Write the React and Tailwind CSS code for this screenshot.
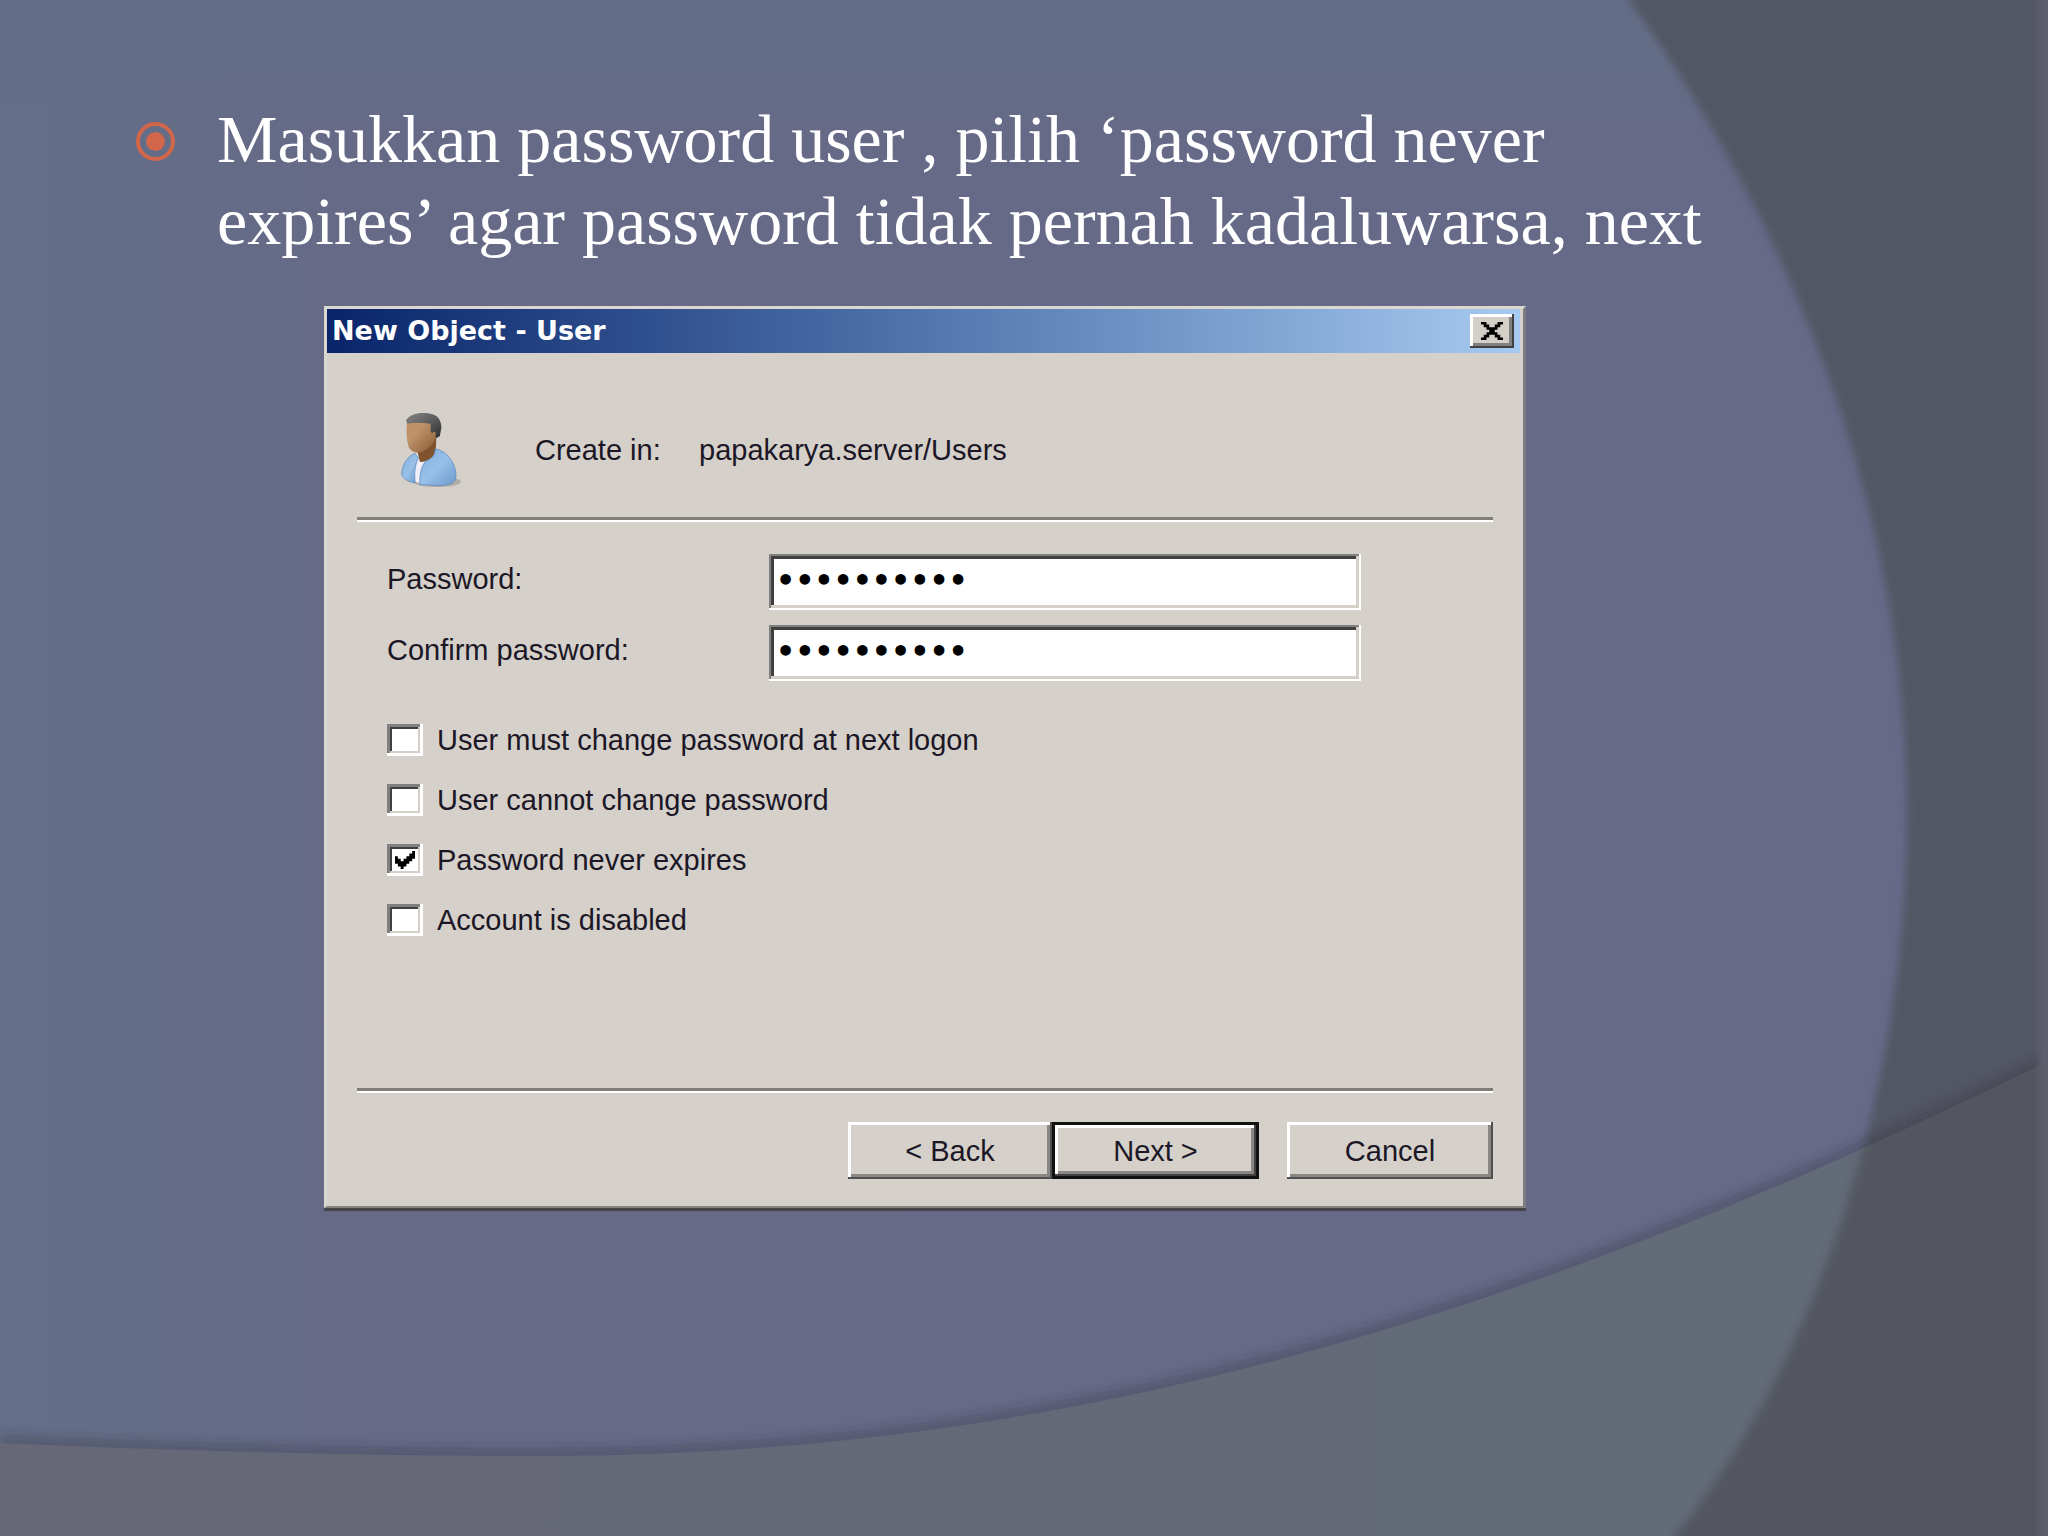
import { useState } from 'react';

const OPTIONS = [
  { id: 'mustChange', label: 'User must change password at next logon' },
  { id: 'cannotChange', label: 'User cannot change password' },
  { id: 'neverExpires', label: 'Password never expires' },
  { id: 'disabled', label: 'Account is disabled' },
];

const ARC = 'M1629 0C1800 240 1907 520 1907 815C1907 1100 1810 1370 1675 1536';
const WAVE = 'M0 1443C180 1451 360 1456 540 1456C1050 1456 1500 1330 2048 1062';

function Backdrop() {
  return (
    <svg
      className="absolute inset-0 h-full w-full"
      viewBox="0 0 2048 1536"
      preserveAspectRatio="none"
      aria-hidden="true"
    >
      <defs>
        <linearGradient id="base" x1="0" y1="0" x2="1" y2="0">
          <stop offset="0" stopColor="#646e88" />
          <stop offset="0.07" stopColor="#646d87" />
          <stop offset="0.16" stopColor="#666a87" />
          <stop offset="1" stopColor="#666a88" />
        </linearGradient>
        <linearGradient id="topGlow" x1="0" y1="0" x2="0" y2="1">
          <stop offset="0" stopColor="#646d87" />
          <stop offset="0.5" stopColor="#646d87" />
          <stop offset="1" stopColor="#646d87" stopOpacity="0" />
        </linearGradient>
        <linearGradient id="floor" x1="0" y1="0" x2="1" y2="0">
          <stop offset="0" stopColor="#676877" />
          <stop offset="0.45" stopColor="#656977" />
          <stop offset="0.7" stopColor="#636a78" />
          <stop offset="1" stopColor="#636a78" />
        </linearGradient>
        <filter id="soft" x="-10%" y="-10%" width="120%" height="120%">
          <feGaussianBlur stdDeviation="4" />
        </filter>
        <clipPath id="belowWave">
          <path d={`${WAVE}V1536H0Z`} />
        </clipPath>
      </defs>
      <rect width="2048" height="1536" fill="url(#base)" />
      <rect width="2048" height="130" fill="url(#topGlow)" />
      <path d={`${ARC}V1600H2100V-60H1590Z`} fill="#535664" filter="url(#soft)" />
      <path d={WAVE} fill="none" stroke="#2a2d3a" strokeOpacity="0.28" strokeWidth="18" filter="url(#soft)" />
      <g clipPath="url(#belowWave)">
        <rect width="2048" height="1536" fill="url(#floor)" />
        <path d={`${ARC}V1600H2100V-60H1590Z`} fill="#53575f" filter="url(#soft)" />
        <path d="M0 1536H1670" stroke="#70707f" strokeWidth="14" filter="url(#soft)" />
      </g>
      <rect x="2039" y="-20" width="40" height="1600" fill="#5e606d" filter="url(#soft)" />
    </svg>
  );
}

function UserIcon() {
  return (
    <svg className="h-[78px] w-[63px]" viewBox="60 30 190 235" aria-hidden="true">
      <defs>
        <linearGradient id="skin" x1="0" y1="0" x2="1" y2="1">
          <stop offset="0" stopColor="#bd9168" />
          <stop offset="0.35" stopColor="#c0926a" />
          <stop offset="1" stopColor="#865a33" />
        </linearGradient>
        <linearGradient id="hair" x1="0" y1="0" x2="1" y2="1">
          <stop offset="0" stopColor="#868684" />
          <stop offset="0.5" stopColor="#5c5d5d" />
          <stop offset="1" stopColor="#2d2e30" />
        </linearGradient>
        <linearGradient id="shirt" x1="0" y1="0" x2="1" y2="1">
          <stop offset="0" stopColor="#82aedb" />
          <stop offset="0.5" stopColor="#98c0e9" />
          <stop offset="1" stopColor="#6c9bcc" />
        </linearGradient>
      </defs>
      <ellipse cx="172" cy="243" rx="72" ry="16" fill="#8d8b82" opacity="0.5" />
      <path d="M108 158L144 176L136 252L102 242Z" fill="#f0effa" />
      <path d="M110 140L170 96L168 150C162 170 146 184 120 184Z" fill="#80532c" />
      <path d="M106 158C84 164 66 192 65 220C68 235 84 243 106 247C102 218 106 188 116 172Z" fill="url(#shirt)" stroke="#5584b6" strokeWidth="2" />
      <path d="M166 144C200 150 227 184 229 222C230 244 216 254 180 255L120 252C118 222 124 196 138 180C156 176 166 162 166 144Z" fill="url(#shirt)" stroke="#5584b6" strokeWidth="2" />
      <path d="M82 60C78 86 79 114 86 138C92 152 106 158 122 154C144 146 162 130 168 108L164 60Z" fill="url(#skin)" />
      <path d="M78 58C90 40 112 34 138 36C168 38 184 50 185 80L180 106L168 112C170 96 164 86 158 96L153 94L152 68C128 66 104 64 82 68Z" fill="url(#hair)" />
    </svg>
  );
}

function Separator() {
  return <div className="h-[5px] border-t-3 border-b-2 border-t-[#817e79] border-b-white" />;
}

function PasswordField({ id, label, value, onChange }) {
  return (
    <div className="flex">
      <label htmlFor={id} className="w-[382px] pt-[7px]">
        {label}
      </label>
      <input
        id={id}
        type="password"
        value={value}
        onChange={(e) => onChange(e.target.value)}
        className="h-14 w-[592px] bg-white px-[7px] pb-1 font-['DejaVu_Sans',sans-serif] text-[30px] leading-none font-bold text-black shadow-[inset_-2px_-2px_0_#fff,inset_2px_2px_0_#808080,inset_-5px_-5px_0_#d4d0c8,inset_5px_5px_0_#404040] outline-none"
      />
    </div>
  );
}

function CheckOption({ label, checked, onChange }) {
  return (
    <label className="flex h-8 items-center gap-[14px]">
      <span className="grid place-items-center">
        <input
          type="checkbox"
          checked={checked}
          onChange={onChange}
          className="col-start-1 row-start-1 h-8 w-9 appearance-none bg-white shadow-[inset_-3px_-3px_0_#fff,inset_3px_3px_0_#808080,inset_-5px_-5px_0_#d4d0c8,inset_5px_5px_0_#404040]"
        />
        {checked && (
          <svg
            className="pointer-events-none col-start-1 row-start-1 h-[18px] w-5"
            viewBox="0 0 7 7"
            preserveAspectRatio="none"
            aria-hidden="true"
          >
            <path d="M0 2h1v1h1v1h1v-1h1v-1h1v-1h1v-1h1v3h-1v1h-1v1h-1v1h-1v1h-1v-1h-1v-1h-1z" />
          </svg>
        )}
      </span>
      {label}
    </label>
  );
}

function App() {
  const [password, setPassword] = useState('p4p4k4ry4!');
  const [confirm, setConfirm] = useState('p4p4k4ry4!');
  const [checked, setChecked] = useState({ neverExpires: true });

  const toggle = (id) => setChecked((prev) => ({ ...prev, [id]: !prev[id] }));

  return (
    <main className="relative min-h-screen overflow-hidden bg-[#666a87]">
      <Backdrop />
      <div className="relative pt-[98px]">
        <ul className="pl-[136px]">
          <li className="flex gap-[42px]">
            <svg className="mt-6 h-[39px] w-[39px] shrink-0" viewBox="0 0 39 39" aria-hidden="true">
              <circle cx="19.5" cy="19.5" r="17.5" fill="none" stroke="#d1664a" strokeWidth="4" />
              <circle cx="19.5" cy="19.5" r="9.5" fill="#d1664a" />
            </svg>
            <p className="max-w-[1520px] font-['Liberation_Serif',serif] text-[68px] leading-[82px] text-white">
              Masukkan password user , pilih ‘password never expires’ agar password tidak pernah kadaluwarsa, next
            </p>
          </li>
        </ul>

        <section
          aria-labelledby="dialog-title"
          className="mt-11 ml-[324px] w-full max-w-[1202px] border-3 border-b-2 border-[#dad7d0] border-r-[#7b7c80] border-b-[#85837f] bg-[#d5d0c9] font-['Liberation_Sans',sans-serif] text-[29px] leading-9 text-[#1b1726] shadow-[0_3px_0_#45454a]"
        >
          <header className="mr-[3px] flex h-11 items-center justify-between bg-linear-to-r from-[#0a246a] to-[#a6caf0] pr-[6px] pl-[5px]">
            <h1 id="dialog-title" className="font-['DejaVu_Sans',sans-serif] text-[27px] font-bold text-white">
              New Object - User
            </h1>
            <button
              type="button"
              aria-label="Close"
              className="flex h-[34px] w-11 items-center justify-center bg-[#d4d0c8] shadow-[inset_-2px_-2px_0_#404040,inset_3px_3px_0_#fff,inset_-5px_-5px_0_#808080]"
            >
              <svg className="h-[18px] w-[22px]" viewBox="0 0 8 7" preserveAspectRatio="none" aria-hidden="true">
                <path d="M0 0h2v1h1v1h2v-1h1v-1h2v1h-1v1h-1v1h-1v1h1v1h1v1h1v1h-2v-1h-1v-1h-2v1h-1v1h-2v-1h1v-1h1v-1h1v-1h-1v-1h-1v-1h-1z" />
              </svg>
            </button>
          </header>

          <div className="px-[30px] pt-[58px] pb-[27px]">
            <div className="flex items-center pb-7 pl-[43px]">
              <UserIcon />
              <span className="ml-[72px] w-[164px]">Create in:</span>
              <span>papakarya.server/Users</span>
            </div>
            <Separator />

            <form className="pt-8 pb-[152px] pl-[30px]" onSubmit={(e) => e.preventDefault()}>
              <div className="flex flex-col gap-[15px]">
                <PasswordField id="password" label="Password:" value={password} onChange={setPassword} />
                <PasswordField id="confirm" label="Confirm password:" value={confirm} onChange={setConfirm} />
              </div>
              <div className="mt-[43px] flex flex-col items-start gap-7">
                {OPTIONS.map((option) => (
                  <CheckOption
                    key={option.id}
                    label={option.label}
                    checked={Boolean(checked[option.id])}
                    onChange={() => toggle(option.id)}
                  />
                ))}
              </div>
            </form>

            <Separator />
            <div className="flex justify-end pt-[29px]">
              <button
                type="button"
                className="h-[57px] w-[204px] shadow-[inset_-2px_-2px_0_#505050,inset_3px_3px_0_#fff,inset_-5px_-5px_0_#8a8783]"
              >
                &lt; Back
              </button>
              <button
                type="button"
                className="h-[57px] w-[207px] shadow-[inset_0_0_0_3px_#111,inset_-5px_-5px_0_#404040,inset_6px_6px_0_#fff,inset_-8px_-8px_0_#8a8783]"
              >
                Next &gt;
              </button>
              <button
                type="button"
                className="ml-7 h-[57px] w-[206px] shadow-[inset_-2px_-2px_0_#505050,inset_3px_3px_0_#fff,inset_-5px_-5px_0_#8a8783]"
              >
                Cancel
              </button>
            </div>
          </div>
        </section>
      </div>
    </main>
  );
}

export default App;
